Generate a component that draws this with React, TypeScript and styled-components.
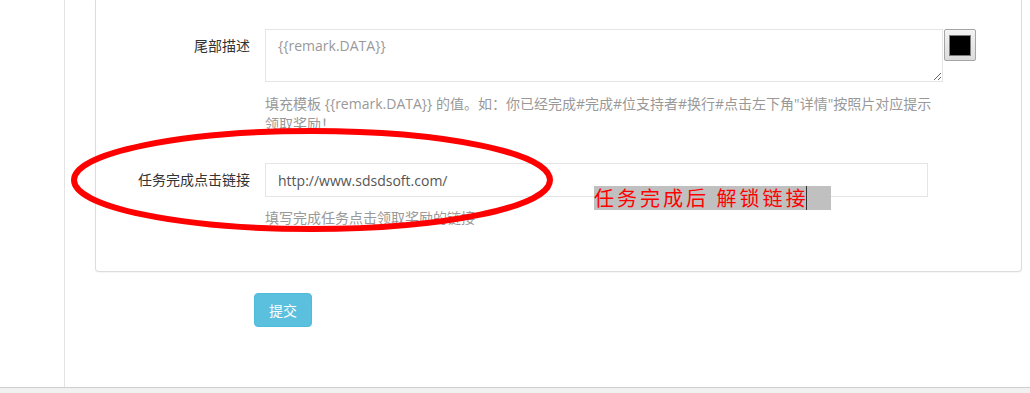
import React from 'react'
import styled, { createGlobalStyle } from 'styled-components'

const GlobalStyle = createGlobalStyle`
  html, body {
    margin: 0;
    padding: 0;
    background: #fff;
  }
  body {
    font-family: "Open Sans", "Noto Sans CJK SC", sans-serif;
    font-size: 14px;
    color: #333;
  }
`

const Page = styled.div`
  position: relative;
  display: flex;
  flex-direction: column;
  width: 1030px;
  height: 393px;
  overflow: hidden;
`

const Body = styled.div`
  display: flex;
  flex: 1;
`

const Sidebar = styled.aside`
  width: 64px;
  border-right: 1px solid #e3e3e3;
`

const Main = styled.main`
  flex: 1;
  padding: 0 8px 0 30px;
`

const Panel = styled.section`
  border: 1px solid #dcdcdc;
  border-top: none;
  border-radius: 0 0 4px 4px;
  box-shadow: 0 1px 1px rgba(0, 0, 0, 0.04);
  padding: 29px 0 43px;
`

const FormGroup = styled.div<{ $gap?: number }>`
  display: grid;
  grid-template-columns: 154px auto;
  column-gap: 15px;
  margin-top: ${(p) => p.$gap ?? 0}px;
`

const Label = styled.label`
  padding-top: 7px;
  line-height: 20px;
  text-align: right;
  color: #333;
  font-size: 14px;
`

const Controls = styled.div`
  display: flex;
  flex-direction: column;
`

const ControlLine = styled.div`
  display: flex;
  align-items: flex-start;
  gap: 1px;
`

const TextArea = styled.textarea`
  box-sizing: border-box;
  display: block;
  width: 678px;
  height: 53px;
  margin: 0;
  padding: 6px 12px;
  border: 1px solid #e5e5e5;
  border-radius: 0;
  font: 14px/20px "Open Sans", "Noto Sans CJK SC", sans-serif;
  color: #999;
  outline: none;
`

const Input = styled.input`
  box-sizing: border-box;
  display: block;
  width: 663px;
  height: 34px;
  margin: 0;
  padding: 6px 12px;
  border: 1px solid #e5e5e5;
  border-radius: 0;
  font: 14px/20px "Open Sans", "Noto Sans CJK SC", sans-serif;
  color: #555;
  outline: none;
`

const ColorButton = styled.button`
  box-sizing: border-box;
  display: flex;
  align-items: center;
  justify-content: center;
  width: 32px;
  height: 32px;
  padding: 0;
  border: 1px solid #a5a5a5;
  border-radius: 2px;
  background: linear-gradient(#f3f3f3, #dcdcdc);
`

const Swatch = styled.span<{ $color: string }>`
  box-sizing: border-box;
  display: block;
  width: 22px;
  height: 21px;
  border: 1px solid #7a7a7a;
  background: ${(p) => p.$color};
`

const Help = styled.p<{ $top: number }>`
  width: 678px;
  margin: ${(p) => p.$top}px 0 0;
  font-size: 14px;
  line-height: 20px;
  color: #999;
`

const Actions = styled.div`
  padding: 21px 0 0 159px;
`

const SubmitButton = styled.button`
  box-sizing: border-box;
  width: 58px;
  height: 34px;
  padding: 0;
  border: 1px solid #4fbbdb;
  border-radius: 4px;
  background: #5bc0de;
  color: #fff;
  font: 14px "Noto Sans CJK SC", sans-serif;
`

const Footer = styled.footer`
  height: 5px;
  border-top: 1px solid #cfcfcf;
  background: #f1f1f1;
`

const Annotation = styled.svg`
  position: absolute;
  left: 68px;
  top: 125px;
  pointer-events: none;
`

const Note = styled.div`
  position: absolute;
  left: 594px;
  top: 186px;
  display: flex;
  align-items: center;
  width: 237px;
  height: 24px;
  background: #c0c0c0;
  color: #ff0000;
  font: 20px/24px "Noto Sans CJK SC", sans-serif;
  letter-spacing: 3px;
  white-space: nowrap;
`

const Caret = styled.span`
  display: inline-block;
  width: 1px;
  height: 24px;
  margin-left: -2px;
  background: #333;
`

export default function App() {
  return (
    <Page>
      <GlobalStyle />
      <Body>
        <Sidebar />
        <Main>
          <Panel>
            <FormGroup>
              <Label>尾部描述</Label>
              <Controls>
                <ControlLine>
                  <TextArea defaultValue="{{remark.DATA}}" />
                  <ColorButton>
                    <Swatch $color="#000" />
                  </ColorButton>
                </ControlLine>
                <Help $top={12}>
                  填充模板 {'{{remark.DATA}}'} 的值。如：你已经完成#完成#位支持者#换行#点击左下角"详情"按照片对应提示领取奖励！
                </Help>
              </Controls>
            </FormGroup>
            <FormGroup $gap={29}>
              <Label>任务完成点击链接</Label>
              <Controls>
                <Input defaultValue="http://www.sdsdsoft.com/" />
                <Help $top={11}>填写完成任务点击领取奖励的链接</Help>
              </Controls>
            </FormGroup>
          </Panel>
          <Actions>
            <SubmitButton>提交</SubmitButton>
          </Actions>
        </Main>
      </Body>
      <Footer />
      <Annotation width="490" height="112" viewBox="0 0 490 112">
        <ellipse
          cx="244"
          cy="55"
          rx="238"
          ry="49"
          fill="none"
          stroke="#ff0000"
          strokeWidth="6"
        />
      </Annotation>
      <Note>
        任务完成后 解锁链接
        <Caret />
      </Note>
    </Page>
  )
}
